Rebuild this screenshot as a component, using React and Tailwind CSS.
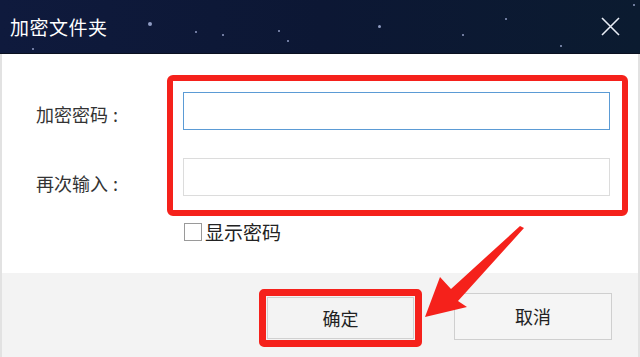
import React from 'react';

const stars = [
  [148, 22, 2], [195, 31, 1], [222, 34, 1], [278, 30, 1], [287, 40, 1], [378, 25, 1.5], [462, 34, 1], [505, 18, 1], [633, 4, 1], [32, 48, 1], [560, 45, 1],
];

export default function App() {
  return (
    <div
      className="relative w-[640px] h-[357px] overflow-hidden bg-white"
      style={{ fontFamily: '"Noto Sans CJK SC", "Noto Sans", sans-serif' }}
    >
      {/* title bar */}
      <div className="relative h-[54px] flex items-center justify-between pl-[10px] pr-[20px] bg-gradient-to-r from-[#0f1a3d] via-[#0c1734] to-[#0b1b30] border-b border-[#0a1020]">
        {stars.map(([x, y, r], i) => (
          <span
            key={i}
            className="absolute rounded-full bg-[#c8d4ff] opacity-70"
            style={{ left: x, top: y, width: r * 2, height: r * 2 }}
          />
        ))}
        <span className="relative text-[19px] text-white leading-none tracking-[0.5px]">加密文件夹</span>
        <svg className="relative" width="19" height="19" viewBox="0 0 19 19">
          <path d="M1 1 L18 18 M18 1 L1 18" stroke="#e8ecf5" strokeWidth="1.6" />
        </svg>
      </div>

      {/* body */}
      <div className="h-[219px] border-x-2 border-[#e2e2e2] flex flex-col">
        <div className="flex pt-[21px]">
          <div className="w-[165px] flex flex-col pl-[34px] text-[18px] text-[#333] leading-none">
            <div className="h-[20px] mt-[29px] flex items-center">加密密码<span className="ml-[5px]">:</span></div>
            <div className="h-[20px] mt-[49px] flex items-center">再次输入<span className="ml-[5px]">:</span></div>
          </div>
          <div className="w-[461px] border-[6px] border-[#f5211b] rounded-[6px] pt-[11px] pb-[14px] pl-[10px] pr-[12px] flex flex-col gap-[28px]">
            <div className="h-[38px] border border-[#5b9bd5] bg-white" />
            <div className="h-[38px] border border-[#dcdcdc] bg-white" />
          </div>
        </div>
        <div className="flex items-center pl-[182px] mt-[6px] gap-[3px]">
          <div className="w-[18px] h-[18px] border border-[#9a9a9a] bg-white" />
          <span className="text-[19px] text-[#222] leading-none">显示密码</span>
        </div>
      </div>

      {/* footer */}
      <div className="h-[84px] bg-[#f3f3f3] border-x-2 border-[#e2e2e2] flex items-start pt-[16px] pl-[257px]">
        <div className="w-[163px] h-[58px] border-[7px] border-[#f5211b] rounded-[5px] p-[1px]">
          <div className="w-full h-full bg-[#f3f3f3] border border-[#d0d0d0] flex items-center justify-center text-[18px] text-[#222]">
            确定
          </div>
        </div>
        <div className="ml-[32px] mt-[4px] w-[158px] h-[47px] bg-[#f5f5f5] border border-[#cfcfcf] flex items-center justify-center text-[18px] text-[#222]">
          取消
        </div>
      </div>

      {/* arrow annotation */}
      <svg className="absolute left-0 top-0 pointer-events-none" width="640" height="357" viewBox="0 0 640 357">
        <polygon
          points="524,228 458,301 467,307 425,317 440,277 451,289 520,226"
          fill="#f5211b"
        />
      </svg>
    </div>
  );
}
